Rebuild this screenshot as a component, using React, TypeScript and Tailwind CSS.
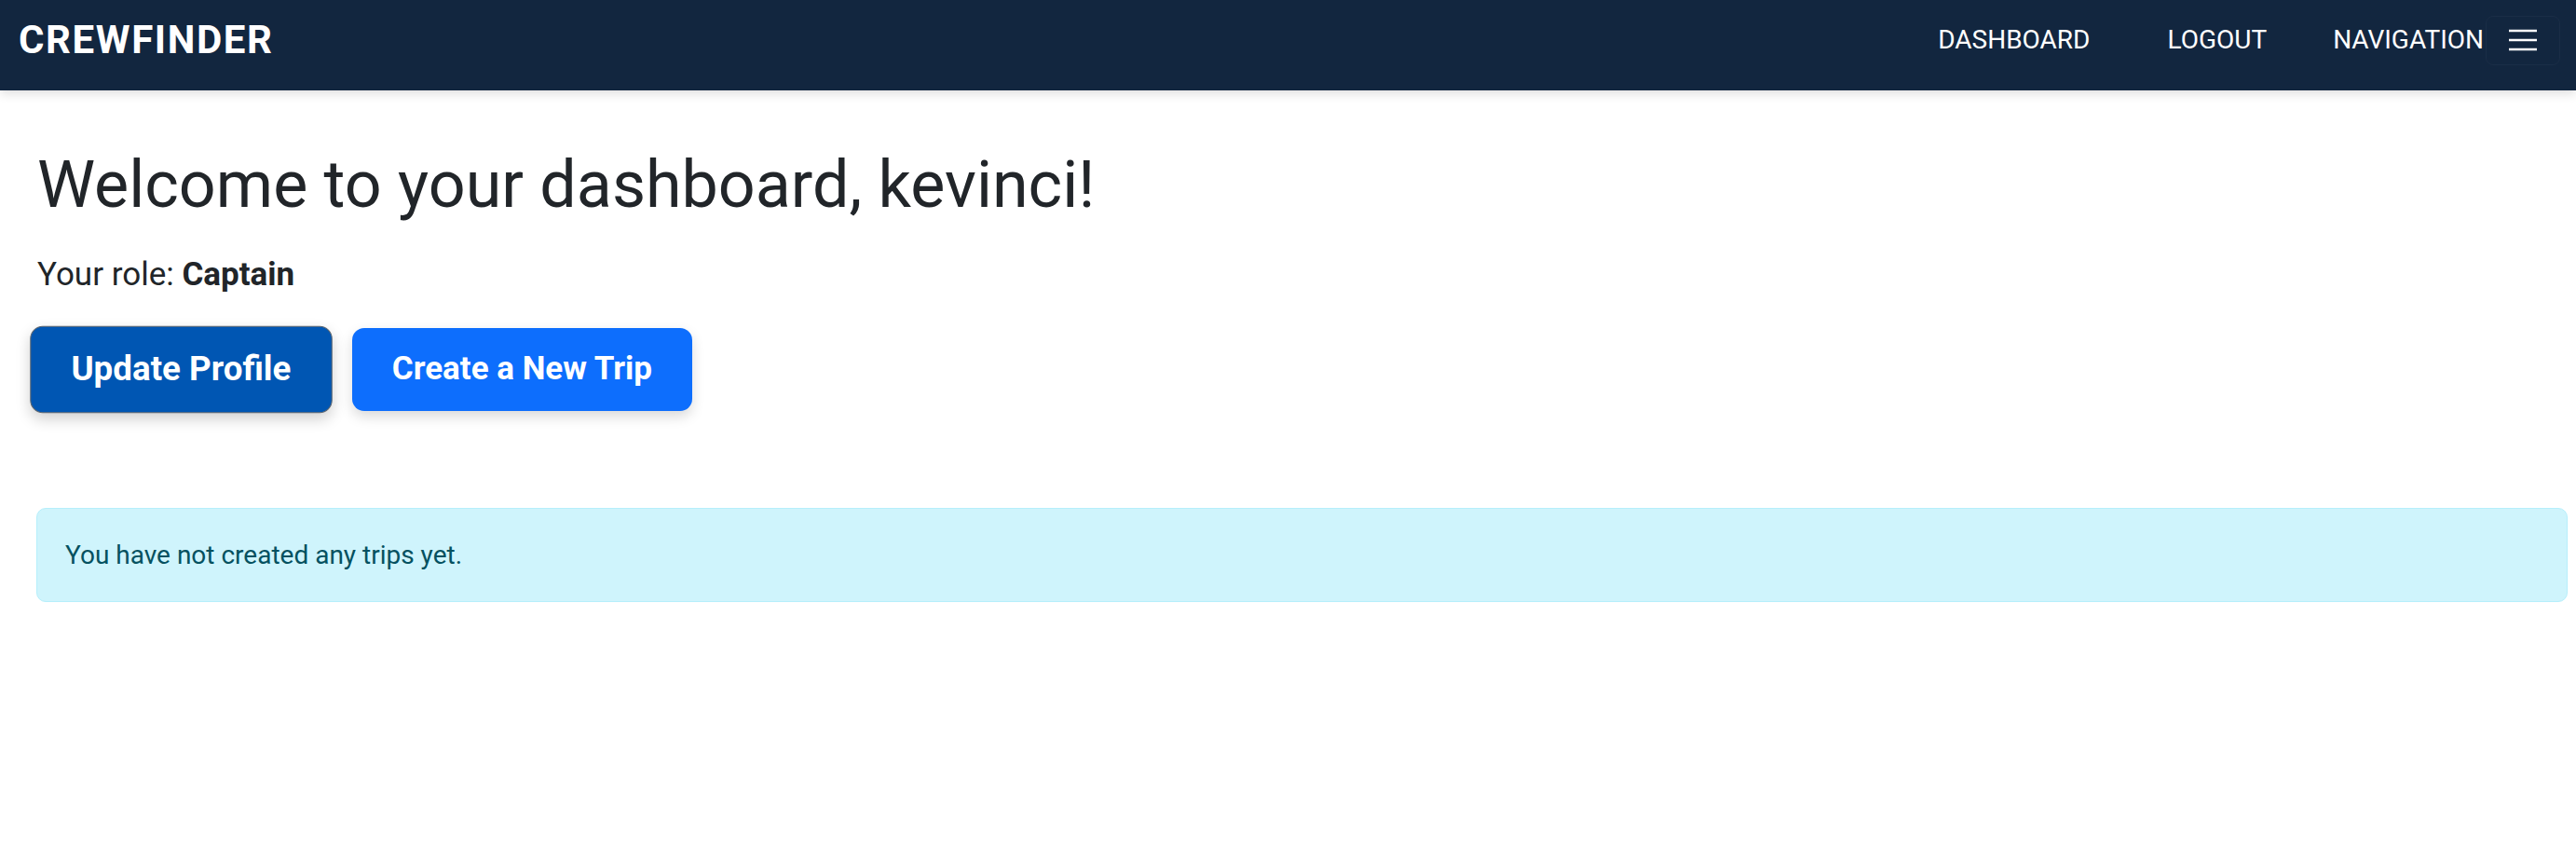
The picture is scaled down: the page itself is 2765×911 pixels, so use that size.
import React from "react";

export default function App() {
  return (
    <div className="min-h-[911px] bg-white" style={{ fontFamily: "Roboto, 'Noto Sans', sans-serif" }}>
      <nav className="relative z-10 flex h-[97px] items-center bg-[#12263f] pb-[11px] pl-[20px] pr-[17px] shadow-[0_4px_10px_rgba(0,0,0,0.12)]">
        <div className="text-[42px] font-bold leading-none tracking-[1.6px] text-white">CREWFINDER</div>
        <div className="ml-auto flex items-center text-[28px] leading-none text-white">
          <a>DASHBOARD</a>
          <a className="ml-[83px]">LOGOUT</a>
          <span className="ml-[71px]">NAVIGATION</span>
          <button className="ml-[2px] flex h-[53px] w-[80px] items-center justify-center rounded-[8px] border border-[#1a2d46]">
            <svg width="30" height="24" viewBox="0 0 30 24">
              <line x1="0" y1="2" x2="30" y2="2" stroke="white" strokeWidth="2.5" />
              <line x1="0" y1="12" x2="30" y2="12" stroke="white" strokeWidth="2.5" />
              <line x1="0" y1="22" x2="30" y2="22" stroke="white" strokeWidth="2.5" />
            </svg>
          </button>
        </div>
      </nav>
      <main className="pl-[40px] pr-[9px] pt-[59px]">
        <h1 className="text-[70px] font-normal leading-[84px] text-[#212529]">
          Welcome to your dashboard, kevinci!
        </h1>
        <p className="mt-[29px] text-[35px] leading-[52px] text-[#212529]">
          Your role: <span className="font-bold">Captain</span>
        </p>
        <div className="mt-[31px] flex items-center gap-[29px]">
          <button className="h-[89px] scale-105 rounded-[13px] border border-[#5c6670] bg-[#0056b3] px-[41px] text-[35px] font-bold text-white shadow-[0_6px_14px_rgba(0,0,0,0.18)]">
            Update Profile
          </button>
          <button className="h-[89px] rounded-[13px] bg-[#0d6efd] px-[43px] text-[35px] font-bold text-white shadow-[0_6px_14px_rgba(0,0,0,0.15)]">
            Create a New Trip
          </button>
        </div>
        <div className="-ml-[1px] mt-[104px] flex h-[101px] items-center rounded-[10px] border border-[#b6effb] bg-[#cff4fc] pl-[30px] text-[28px] text-[#055160]">
          You have not created any trips yet.
        </div>
      </main>
    </div>
  );
}
